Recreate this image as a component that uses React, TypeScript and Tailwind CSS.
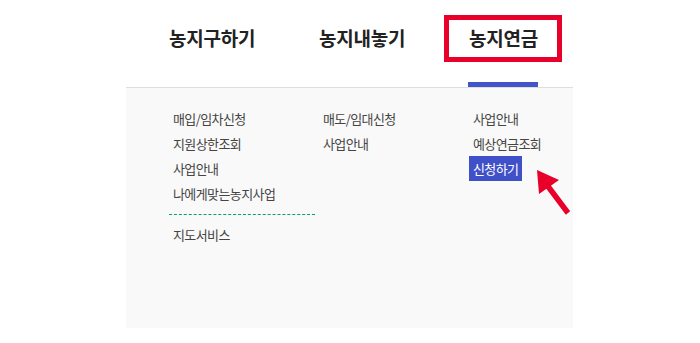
import React from "react";

const FONT = { fontFamily: '"Noto Sans CJK KR", "Noto Sans", sans-serif' };

const NAV = ["농지구하기", "농지내놓기", "농지연금"];

const COLUMNS: { items: string[]; extra?: string[] }[] = [
  { items: ["매입/임차신청", "지원상한조회", "사업안내", "나에게맞는농지사업"], extra: ["지도서비스"] },
  { items: ["매도/임대신청", "사업안내"] },
  { items: ["사업안내", "예상연금조회", "신청하기"] },
];

export default function App() {
  return (
    <div className="relative h-[343px] w-[700px] overflow-hidden bg-white" style={FONT}>
      <div className="ml-[126px] w-[447px]">
        <nav className="flex h-[87px] pl-[43px]">
          {NAV.map((label, i) => (
            <div key={label} className="flex w-[150px] shrink-0 flex-col items-start justify-between">
              <span className="pt-[26px] text-[19px] font-bold leading-[24px] tracking-[-0.2px] text-[#222]">
                {label}
              </span>
              {i === 2 && <span className="ml-[-1px] h-[5px] w-[70px] bg-[#4353c9]" />}
            </div>
          ))}
        </nav>

        <div className="h-[241px] border-t border-[#dedede] bg-[#f9f9f9] pl-[43px] pt-[18px]">
          <div className="grid grid-cols-[150px_150px_150px]">
            {COLUMNS.map((col, ci) => (
              <div key={ci} className="flex flex-col items-start">
                {col.items.map((item) => (
                  <MenuLink key={item} label={item} active={ci === 2 && item === "신청하기"} />
                ))}
                {col.extra && (
                  <>
                    <div className="mb-[7px] mt-[8px] w-[146px] border-t border-dashed border-[#0c9c7c]" />
                    {col.extra.map((item) => (
                      <MenuLink key={item} label={item} />
                    ))}
                  </>
                )}
              </div>
            ))}
          </div>
        </div>
      </div>

      {/* annotation */}
      <div className="absolute left-[444px] top-[15px] h-[47px] w-[118px] border-[5px] border-[#e8002b]" />
      <svg className="absolute left-[530px] top-[165px]" width="45" height="55" viewBox="0 0 45 55">
        <polygon points="7,5 29,15 9,29" fill="#e8002b" />
        <line x1="17" y1="20" x2="38" y2="48" stroke="#e8002b" strokeWidth="5.5" />
      </svg>
    </div>
  );
}

function MenuLink({ label, active = false }: { label: string; active?: boolean }) {
  return (
    <a
      href="#"
      className={
        "flex h-[25px] items-center px-[4px] text-[13px] tracking-[-0.6px] " +
        (active ? "bg-[#3f50c8] text-white" : "text-[#444]")
      }
    >
      {label}
    </a>
  );
}
